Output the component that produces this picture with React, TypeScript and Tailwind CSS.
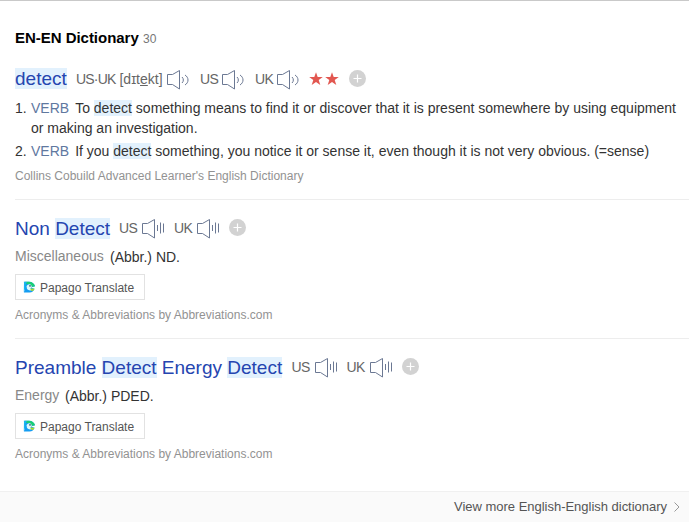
import type { ReactNode } from 'react';

function Mark({ children }: { children: ReactNode }) {
  return <mark className="bg-[#e2f1fd] text-inherit">{children}</mark>;
}

function Speaker({ bars = false }: { bars?: boolean }) {
  return (
    <svg className="h-[22px] w-[23px] shrink-0" viewBox="0 0 23 22" fill="none" stroke="#6b7893" strokeWidth="1">
      {bars ? (
        <>
          <path d="M6.500 6.500H1.500v10h5M6.500 6.500L13.500 2.500v18.500l-7-4.500" />
          <path d="M16.500 8v6M19.500 5.500v11M22.500 6.500v9" />
        </>
      ) : (
        <>
          <path d="M5.500 6.500H.5v10h5M5.500 6.500L12.500 2.500v18.500l-7-4.500" />
          <path d="M15 9c1.800 1.500 1.800 4.500 0 6M18 7c4 2.500 4 7.500 0 10" />
        </>
      )}
    </svg>
  );
}

function Voice({ label, bars }: { label: string; bars?: boolean }) {
  return (
    <span className="flex w-[55px] shrink-0 items-center">
      <span className="w-[22px] text-[14px] tracking-[-0.7px] text-[#666]">{label}</span>
      <Speaker bars={bars} />
    </span>
  );
}

function Plus() {
  return (
    <svg className="h-[18px] w-[18px] shrink-0" viewBox="0 0 18 18">
      <circle cx="8.500" cy="8.500" r="8.500" fill="#d2d2d2" />
      <path d="M4.500 8.500h8M8.500 4.500v8" stroke="#fff" strokeWidth="1.2" />
    </svg>
  );
}

function Star() {
  return (
    <svg className="h-[16px] w-[16px]" viewBox="0 0 16 16" fill="#e25750">
      <path d="M8 1.200l1.700 4.900h5.100l-4.100 3 1.600 4.900L8 11l-4.300 3 1.600-4.900-4.100-3h5.100z" />
    </svg>
  );
}

function Papago() {
  return (
    <svg className="h-[12px] w-[13px]" viewBox="0 0 13 12">
      <path d="M.8.800H5Q10.500.300 12 5.300L8 6.500l3.500 1.200Q10.500 11.400 6.500 11.400H.8L2 8z" fill="#159df2" />
      <path d="M1.500.800H5Q10.500.300 12 5.300L8 6 6 3.200 3 3z" fill="#19cd75" />
      <path d="M1 1L4 1Q2 3 2.500 7L.8 11z" fill="#19b5ee" />
      <path d="M3.500 5q2-2.500 4.500-1.200l.8 2L7.500 7.500 10 8.700Q6 10.500 4 8z" fill="#dff8fa" />
      <path d="M7 7.500l4.700.3Q10.500 10.500 8.500 10z" fill="#a5db32" />
      <circle cx="7" cy="4.900" r=".8" fill="#164978" />
    </svg>
  );
}

function Entry({ title, subject, abbr, subjectWidth, titleWidth }: {
  title: ReactNode; subject: string; abbr: string; subjectWidth: string; titleWidth: string;
}) {
  return (
    <section className="ml-[15px] h-[139px] border-t border-[#ededed] pt-[16px]">
      <div className="flex h-[24px] items-center whitespace-nowrap">
        <h2 className={`${titleWidth} shrink-0 pt-[2px] text-[19px] leading-[22px] text-[#2545b0]`}>{title}</h2>
        <Voice label="US" bars />
        <Voice label="UK" bars />
        <Plus />
      </div>
      <p className="mt-[5px] flex h-[22px] items-center text-[14px] whitespace-nowrap text-[#333]">
        <span className={`${subjectWidth} shrink-0 text-[#888]`}>{subject}</span>
        <span className="pt-[2px]">{abbr}</span>
      </p>
      <button className="mt-[7px] flex h-[26px] w-[130px] items-center gap-[4px] border border-[#e2e2e2] bg-white pl-[7px] text-[12px] whitespace-nowrap text-[#555]">
        <Papago />
        <span className="pt-[2px]">Papago Translate</span>
      </button>
      <p className="mt-[6px] text-[12px] leading-[18px] text-[#929292]">Acronyms &amp; Abbreviations by Abbreviations.com</p>
    </section>
  );
}

export default function App() {
  return (
    <main className="flex h-[522px] w-[689px] flex-col overflow-hidden border-t border-[#c9c9c9] bg-white font-['Liberation_Sans',Arial,sans-serif]">
      <header className="mt-[27px] flex h-[20px] shrink-0 items-center pl-[15px] whitespace-nowrap">
        <h1 className="w-[128px] text-[15px] font-bold tracking-[-0.03px] text-black">EN-EN Dictionary</h1>
        <span className="pt-px text-[12px] text-[#777]">30</span>
      </header>

      <section className="mt-[19px] ml-[15px] h-[132px] shrink-0">
        <div className="flex h-[24px] items-center whitespace-nowrap">
          <h2 className="w-[61px] shrink-0 text-[19px] leading-[22px] text-[#2545b0]"><Mark>detect</Mark></h2>
          <span className="w-[91px] shrink-0 text-[14px] text-[#666]">
            <span className="tracking-[-0.8px]">US·UK</span> [dɪt<u>e</u>kt]
          </span>
          <span className="w-[33px] shrink-0"><Speaker /></span>
          <Voice label="US" />
          <Voice label="UK" />
          <span className="-ml-[2px] flex w-[41px]"><Star /><Star /></span>
          <Plus />
        </div>
        <ol className="mt-[7px] text-[14px] leading-[20px] text-[#333]">
          <li className="flex whitespace-nowrap">
            <span className="w-[16px] shrink-0">1.</span>
            <p>
              <span className="mr-[6px] text-[#5f789f]">VERB</span>
              To <Mark>detect</Mark> something means to find it or discover that it is present somewhere by using equipment
              <br />or making an investigation.
            </p>
          </li>
          <li className="mt-[3px] flex whitespace-nowrap">
            <span className="w-[16px] shrink-0">2.</span>
            <p>
              <span className="mr-[6px] text-[#5f789f]">VERB</span>
              If you <Mark>detect</Mark> something, you notice it or sense it, even though it is not very obvious. (=sense)
            </p>
          </li>
        </ol>
        <p className="mt-[6px] text-[12px] leading-[18px] text-[#929292]">Collins Cobuild Advanced Learner's English Dictionary</p>
      </section>

      <Entry title={<>Non <Mark>Detect</Mark></>} titleWidth="w-[104px]" subject="Miscellaneous" subjectWidth="w-[95px]" abbr="(Abbr.) ND." />
      <Entry title={<>Preamble <Mark>Detect</Mark> Energy <Mark>Detect</Mark></>} titleWidth="w-[276.500px]" subject="Energy" subjectWidth="w-[50px]" abbr="(Abbr.) PDED." />

      <footer className="mt-auto flex h-[31px] shrink-0 items-center justify-end border-t border-[#f0f0f0] bg-[#fafafa] pr-[9px] text-[13px] text-[#555]">
        <span className="tracking-[-0.02px]">View more English-English dictionary</span>
        <svg className="ml-[7px] h-[12px] w-[6px]" viewBox="0 0 6 12" fill="none" stroke="#999"><path d="M.5 1.500L5 6 .5 10.500" /></svg>
      </footer>
    </main>
  );
}
